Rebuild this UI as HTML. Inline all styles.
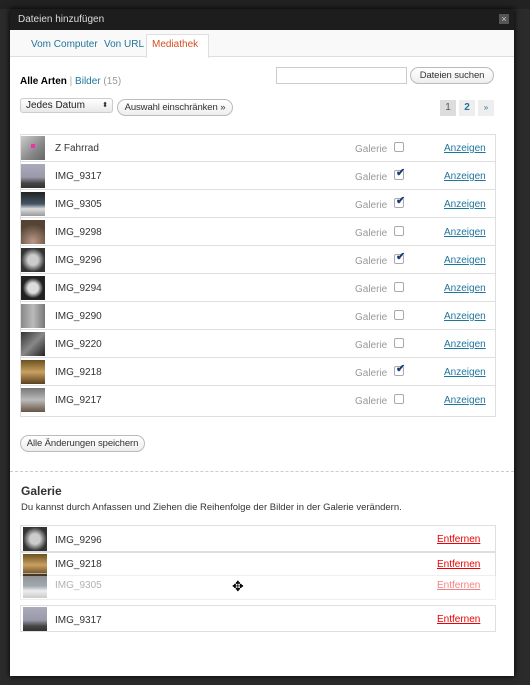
<!DOCTYPE html>
<html><head><meta charset="utf-8"><style>
*{box-sizing:border-box;margin:0;padding:0}
body{width:530px;height:685px;background:#2b2b2b;font-family:"Liberation Sans",sans-serif;font-size:10px;color:#333;position:relative;overflow:hidden}
.abs{position:absolute}
#dlg{left:10px;top:9px;width:504px;height:667px;background:#fff;box-shadow:0 0 6px #000}
#title{left:0;top:0;width:504px;height:21px;background:#1d1d1d;color:#ddd;font-size:10px;line-height:21px;padding-left:8px}
#x{right:5px;top:5px;width:10px;height:10px;background:#555;color:#ccc;font-size:9px;line-height:10px;text-align:center}
#tabs{left:0;top:21px;width:504px;height:27px;background:#f9f9f9;border-bottom:1px solid #dfdfdf}
.tab{top:9px;font-size:10px;color:#21759b}
.btn{border:1px solid #bbb;border-radius:9px;background:linear-gradient(#fff,#eee);font-size:9.5px;line-height:15px;padding:0 5px;color:#333;white-space:nowrap;letter-spacing:-0.1px}
.row{left:10px;width:476px;height:28px;border-bottom:1px solid #dfdfdf}
.th{left:1px;top:2px;width:24px;height:24px}
.nm{left:35px;top:9px;font-size:10px}
.gl{left:335px;top:10px;color:#999}
.cb{left:374px;top:8px;width:10px;height:10px;border:1px solid #aaa;border-radius:2px;background:#fff}
.ck{font-size:11px;color:#1c3d7a;left:1px;top:-5px;position:absolute;font-weight:bold}
.an{left:424px;top:9px;color:#21759b;text-decoration:underline}
.grow{left:10px;width:476px;height:27px;border:1px solid #dfdfdf;background:#fff}
.en{left:416px;top:8px;color:#e00;text-decoration:underline}
</style></head><body>
<div class="abs" style="left:0;top:0;width:530px;height:9px;background:#222"></div>
<div id="dlg" class="abs">
<div id="title" class="abs">Dateien hinzufügen<div id="x" class="abs">×</div></div>
<div id="tabs" class="abs">
<span class="abs tab" style="left:21px">Vom Computer</span>
<span class="abs tab" style="left:94px">Von URL</span>
<div class="abs" style="left:136px;top:4px;width:63px;height:24px;background:#fff;border:1px solid #dfdfdf;border-bottom:none"></div>
<span class="abs tab" style="left:142px;color:#d54e21">Mediathek</span>
</div>
<div class="abs" style="left:10px;top:67px;font-size:10px"><b style="color:#000">Alle Arten</b> <span style="color:#aaa">|</span> <span style="color:#21759b">Bilder</span> <span style="color:#999">(15)</span></div>
<div class="abs" style="left:266px;top:58px;width:131px;height:17px;border:1px solid #ccc"></div>
<div class="abs btn" style="left:400px;top:58px;width:84px;text-align:center">Dateien suchen</div>
<div class="abs" style="left:10px;top:89px;width:93px;height:15px;border:1px solid #ccc;border-radius:3px;background:linear-gradient(#fff,#e8e8e8);font-size:10px;line-height:13px;padding-left:5px;color:#222">Jedes Datum<span style="position:absolute;right:4px;font-size:7px">⬍</span></div>
<div class="abs btn" style="left:107px;top:90px;width:116px;text-align:center">Auswahl einschränken »</div>
<div class="abs" style="left:430px;top:91px;width:16px;height:16px;background:#ddd;text-align:center;line-height:16px;color:#555">1</div>
<div class="abs" style="left:449px;top:91px;width:16px;height:16px;background:#eee;text-align:center;line-height:16px;color:#21759b;font-weight:bold">2</div>
<div class="abs" style="left:468px;top:91px;width:16px;height:16px;background:#eee;text-align:center;line-height:16px;color:#21759b;font-size:8px">»</div>
<div class="abs" style="left:10px;top:125px;width:476px;height:283px;border:1px solid #dfdfdf"></div>
<div class="abs row" style="top:125px"><div class="abs th" style="background:linear-gradient(135deg,#ccc,#888 60%,#666)"><div style="position:absolute;left:10px;top:8px;width:4px;height:4px;background:#e3a"></div></div><span class="abs nm">Z Fahrrad</span><span class="abs gl">Galerie</span><div class="abs cb"></div><span class="abs an">Anzeigen</span></div>
<div class="abs row" style="top:153px"><div class="abs th" style="background:linear-gradient(#aab 0,#99a 55%,#444 80%,#333)"></div><span class="abs nm">IMG_9317</span><span class="abs gl">Galerie</span><div class="abs cb"><span class="ck">✔</span></div><span class="abs an">Anzeigen</span></div>
<div class="abs row" style="top:181px"><div class="abs th" style="background:linear-gradient(#222 0,#456 50%,#ddd 70%,#999)"></div><span class="abs nm">IMG_9305</span><span class="abs gl">Galerie</span><div class="abs cb"><span class="ck">✔</span></div><span class="abs an">Anzeigen</span></div>
<div class="abs row" style="top:209px"><div class="abs th" style="background:radial-gradient(circle at 50% 90%,#b98,#543 70%)"></div><span class="abs nm">IMG_9298</span><span class="abs gl">Galerie</span><div class="abs cb"></div><span class="abs an">Anzeigen</span></div>
<div class="abs row" style="top:237px"><div class="abs th" style="background:radial-gradient(circle,#ccc 30%,#333 70%)"></div><span class="abs nm">IMG_9296</span><span class="abs gl">Galerie</span><div class="abs cb"><span class="ck">✔</span></div><span class="abs an">Anzeigen</span></div>
<div class="abs row" style="top:265px"><div class="abs th" style="background:radial-gradient(#ddd 30%,#222 60%)"></div><span class="abs nm">IMG_9294</span><span class="abs gl">Galerie</span><div class="abs cb"></div><span class="abs an">Anzeigen</span></div>
<div class="abs row" style="top:293px"><div class="abs th" style="background:linear-gradient(90deg,#888,#bbb,#777)"></div><span class="abs nm">IMG_9290</span><span class="abs gl">Galerie</span><div class="abs cb"></div><span class="abs an">Anzeigen</span></div>
<div class="abs row" style="top:321px"><div class="abs th" style="background:linear-gradient(135deg,#333,#888,#222)"></div><span class="abs nm">IMG_9220</span><span class="abs gl">Galerie</span><div class="abs cb"></div><span class="abs an">Anzeigen</span></div>
<div class="abs row" style="top:349px"><div class="abs th" style="background:linear-gradient(#6a5020,#c9a060 50%,#5a4020)"></div><span class="abs nm">IMG_9218</span><span class="abs gl">Galerie</span><div class="abs cb"><span class="ck">✔</span></div><span class="abs an">Anzeigen</span></div>
<div class="abs row" style="top:377px;border-bottom:none"><div class="abs th" style="background:linear-gradient(#777,#bbb 50%,#654)"></div><span class="abs nm">IMG_9217</span><span class="abs gl">Galerie</span><div class="abs cb"></div><span class="abs an">Anzeigen</span></div>
<div class="abs btn" style="left:10px;top:426px;width:125px;text-align:center">Alle Änderungen speichern</div>
<div class="abs" style="left:0;top:462px;width:504px;border-top:1px dashed #ccc"></div>
<div class="abs" style="left:11px;top:475px;font-size:12px;font-weight:bold;color:#333">Galerie</div>
<div class="abs" style="left:11px;top:493px;font-size:9.5px;color:#333">Du kannst durch Anfassen und Ziehen die Reihenfolge der Bilder in der Galerie verändern.</div>
<div class="abs grow" style="top:516px"><div class="abs th" style="left:2px;top:1px;background:radial-gradient(circle,#ccc 30%,#333 70%)"></div><span class="abs nm" style="left:34px">IMG_9296</span><span class="abs en">Entfernen</span></div>
<div class="abs grow" style="top:543px;height:24px"><div class="abs th" style="left:2px;top:1px;height:22px;background:linear-gradient(#6a5020,#c9a060 50%,#5a4020)"></div><span class="abs nm" style="left:34px;top:6px">IMG_9218</span><span class="abs en" style="top:6px">Entfernen</span></div>
<div class="abs grow" style="top:564px;height:27px;opacity:.5;border-top:none"><div class="abs th" style="left:2px;top:1px;background:linear-gradient(#222 0,#456 50%,#ddd 70%,#999)"></div><span class="abs nm" style="left:34px;top:7px;color:#666">IMG_9305</span><span class="abs en" style="top:7px">Entfernen</span></div>
<div class="abs" style="left:222px;top:569px;font-size:14px;color:#000">✥</div>
<div class="abs grow" style="top:596px"><div class="abs th" style="left:2px;top:1px;background:linear-gradient(#aab 0,#99a 55%,#444 80%,#333)"></div><span class="abs nm" style="left:34px">IMG_9317</span><span class="abs en">Entfernen</span></div>
</div>
</body></html>
